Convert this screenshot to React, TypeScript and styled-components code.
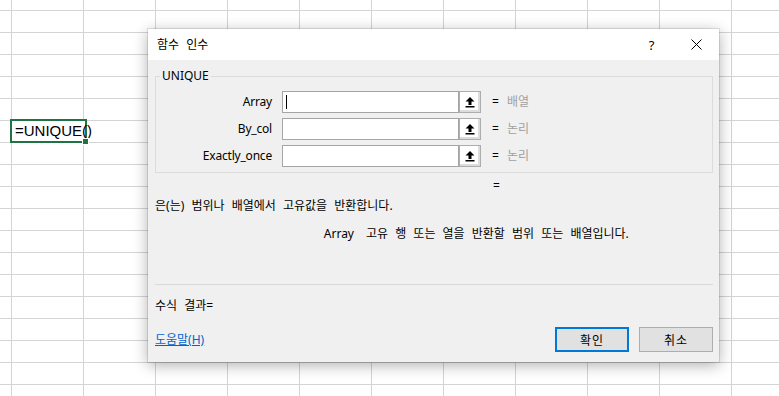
import styled, { createGlobalStyle } from "styled-components";

const GlobalStyle = createGlobalStyle`
    html, body {
        margin: 0;
        padding: 0;
        background: #ffffff;
        overflow: hidden;
    }
`;

const uiFont = `"Noto Sans", "Noto Sans CJK KR", sans-serif`;

const Sheet = styled.div`
    position: relative;
    width: 779px;
    height: 396px;
    background-color: #ffffff;
    background-image:
        linear-gradient(to right, #d4d4d4 1px, transparent 1px),
        linear-gradient(to bottom, #d4d4d4 1px, transparent 1px);
    background-size: 72px 100%, 100% 22px;
    background-position: 11px 0, 0 10px;
    overflow: hidden;
`;

const ActiveCell = styled.div`
    position: absolute;
    left: 10px;
    top: 119px;
    width: 70px;
    height: 20px;
    border: 2px solid #217346;
    background: #ffffff;
    font-family: "Liberation Sans", sans-serif;
    font-size: 15px;
    line-height: 20px;
    padding-left: 3px;
    white-space: nowrap;
    color: #000;
    box-sizing: content-box;
`;

const FillHandle = styled.span`
    position: absolute;
    right: -4px;
    bottom: -4px;
    width: 5px;
    height: 5px;
    background: #217346;
    border: 1px solid #ffffff;
`;

const Dialog = styled.div`
    position: absolute;
    left: 148px;
    top: 29px;
    width: 571px;
    height: 333px;
    background: #f0f0f0;
    box-shadow: 0 3px 14px rgba(0, 0, 0, 0.32), 0 0 0 1px rgba(0, 0, 0, 0.1);
    display: flex;
    flex-direction: column;
    font-family: ${uiFont};
    font-size: 12px;
    word-spacing: 4px;
    color: #000;
`;

const TitleBar = styled.div`
    height: 31px;
    background: #ffffff;
    display: flex;
    align-items: center;
    padding-left: 9px;
`;

const Title = styled.div`
    flex: 1;
    font-size: 12px;
    line-height: 16px;
`;

const TitleButton = styled.div`
    width: 45px;
    height: 31px;
    display: flex;
    align-items: center;
    justify-content: center;
    font-size: 13px;
`;

const Body = styled.div`
    flex: 1;
    display: flex;
    flex-direction: column;
    padding: 8px 6px 10px 7px;
`;

const Group = styled.fieldset`
    margin: 0;
    padding: 7px 0 6px 0;
    border: 1px solid #dcdcdc;
    display: flex;
    flex-direction: column;
    gap: 6px;
    min-width: 0;
`;

const Legend = styled.legend`
    margin-left: 4px;
    padding: 0 2px;
    line-height: 16px;
`;

const ArgRow = styled.div`
    display: flex;
    align-items: center;
    height: 21px;
`;

const ArgLabel = styled.div`
    width: 116px;
    text-align: right;
    margin-right: 10px;
    line-height: 16px;
    letter-spacing: -0.2px;
`;

const InputBox = styled.div`
    position: relative;
    width: 175px;
    height: 20px;
    background: #ffffff;
    border: 1px solid #a5a5a5;
`;

const Caret = styled.span`
    position: absolute;
    left: 3px;
    top: 3px;
    width: 1px;
    height: 14px;
    background: #000;
`;

const RefButton = styled.div`
    width: 20px;
    height: 20px;
    border: 1px solid #adadad;
    background: #ffffff;
    box-shadow: inset -2px -2px 0 #dcdcdc;
    display: flex;
    align-items: center;
    justify-content: center;
`;

const Equals = styled.span`
    margin-left: 11px;
    width: 12px;
    line-height: 16px;
`;

const ArgValue = styled.span`
    margin-left: 3px;
    color: #a0a0a0;
    line-height: 16px;
`;

const ResultLine = styled.div`
    margin-top: 5px;
    padding-left: 338px;
    line-height: 16px;
`;

const Description = styled.div<{ $top: number }>`
    margin-top: ${(p) => p.$top}px;
    line-height: 16px;
    white-space: nowrap;
`;

const ArgHelp = styled.div`
    margin-top: 12px;
    display: flex;
    line-height: 16px;
    white-space: nowrap;
`;

const ArgHelpName = styled.span`
    width: 199px;
    text-align: right;
    margin-right: 12px;
`;

const Separator = styled.div`
    margin-top: auto;
    height: 1px;
    background: #d9d9d9;
`;

const Footer = styled.div`
    margin-top: 13px;
    display: flex;
    align-items: center;
    gap: 10px;
`;

const HelpLink = styled.a`
    flex: 1;
    color: #0066cc;
    text-decoration: underline;
    line-height: 16px;
`;

const Button = styled.button<{ $primary?: boolean }>`
    width: 74px;
    height: 25px;
    margin: 0;
    padding: 0;
    box-sizing: border-box;
    background: #e1e1e1;
    border: ${(p) => (p.$primary ? "2px solid #0078d7" : "1px solid #adadad")};
    font-family: ${uiFont};
    font-size: 12px;
    letter-spacing: 1px;
    color: #000;
`;

const RefArrow = () => (
    <svg width="10" height="12" viewBox="0 0 10 12">
        <polygon points="5,1 9.5,5.5 6.5,5.5 6.5,9 3.5,9 3.5,5.5 0.5,5.5" fill="#000" />
        <rect x="0.5" y="10" width="9" height="1.5" fill="#000" />
    </svg>
);

const CloseIcon = () => (
    <svg width="11" height="11" viewBox="0 0 11 11">
        <path d="M0.5 0.5 L10.5 10.5 M10.5 0.5 L0.5 10.5" stroke="#000" strokeWidth="1" />
    </svg>
);

const args = [
    { name: "Array", value: "배열", focused: true },
    { name: "By_col", value: "논리" },
    { name: "Exactly_once", value: "논리" },
];

const App = () => {
    return (
        <>
            <GlobalStyle />
            <Sheet>
                <ActiveCell>
                    =UNIQUE()
                    <FillHandle />
                </ActiveCell>
                <Dialog>
                    <TitleBar>
                        <Title>함수 인수</Title>
                        <TitleButton>?</TitleButton>
                        <TitleButton>
                            <CloseIcon />
                        </TitleButton>
                    </TitleBar>
                    <Body>
                        <Group>
                            <Legend>UNIQUE</Legend>
                            {args.map((a) => (
                                <ArgRow key={a.name}>
                                    <ArgLabel>{a.name}</ArgLabel>
                                    <InputBox>{a.focused && <Caret />}</InputBox>
                                    <RefButton>
                                        <RefArrow />
                                    </RefButton>
                                    <Equals>=</Equals>
                                    <ArgValue>{a.value}</ArgValue>
                                </ArgRow>
                            ))}
                        </Group>
                        <ResultLine>=</ResultLine>
                        <Description $top={4}>은(는) 범위나 배열에서 고유값을 반환합니다.</Description>
                        <ArgHelp>
                            <ArgHelpName>Array</ArgHelpName>
                            <span>고유 행 또는 열을 반환할 범위 또는 배열입니다.</span>
                        </ArgHelp>
                        <Separator />
                        <Description $top={13}>수식 결과=</Description>
                        <Footer>
                            <HelpLink>도움말(H)</HelpLink>
                            <Button $primary>확인</Button>
                            <Button>취소</Button>
                        </Footer>
                    </Body>
                </Dialog>
            </Sheet>
        </>
    );
};

export default App;
